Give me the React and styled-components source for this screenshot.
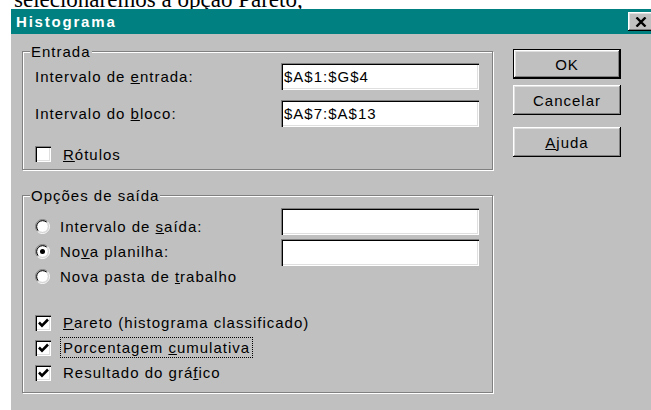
import styled, { createGlobalStyle } from "styled-components";

const GlobalStyle = createGlobalStyle`
  html, body {
    margin: 0;
    background: #fff;
    overflow: hidden;
  }
  body {
    font-family: "Liberation Sans", Arial, sans-serif;
    font-size: 15px;
    letter-spacing: 1px;
    color: #000;
  }
`;

const Page = styled.div`
  width: 651px;
  height: 410px;
  overflow: hidden;
`;

/* tail of the paragraph that sits above the dialog */
const Excerpt = styled.div`
  height: 9px;
  overflow: hidden;
`;

const ExcerptText = styled.p`
  margin: -12px 0 0 14px;
  font-family: "Liberation Serif", "Times New Roman", serif;
  font-size: 23px;
  line-height: 23px;
  letter-spacing: 0;
  white-space: nowrap;
`;

const Desk = styled.div`
  padding-left: 11px;
`;

const Window = styled.div`
  width: 645px;
  background: #c0c0c0;
`;

const TitleBar = styled.div`
  height: 25px;
  display: flex;
  align-items: center;
  justify-content: space-between;
  padding-left: 5px;
  background: #008080;
`;

const Title = styled.span`
  color: #fff;
  font-weight: bold;
  letter-spacing: 1.8px;
`;

const CloseButton = styled.div`
  width: 26px;
  height: 19px;
  margin-right: 2px;
  display: flex;
  align-items: center;
  justify-content: center;
  background: #c0c0c0;
  box-shadow: inset -1px -1px #000, inset 1px 1px #fff, inset -2px -2px #808080,
    inset 2px 2px #dfdfdf;
`;

const DialogBody = styled.div`
  height: 376px;
  display: flex;
  align-items: flex-start;
  padding-left: 11px;
`;

const Groups = styled.div`
  width: 471px;
  padding-top: 17px;
  display: flex;
  flex-direction: column;
  gap: 25px;
`;

const GroupBox = styled.div`
  border: 1px solid #808080;
  box-shadow: inset 1px 1px #fff, 1px 1px #fff;
  padding: 0 13px 7px 12px;
`;

const Caption = styled.div`
  width: fit-content;
  margin: -8px 0 0 -5px;
  padding: 0 1px;
  line-height: 16px;
  background: #c0c0c0;
`;

const FieldGrid = styled.div`
  display: grid;
  grid-template-columns: 246px 198px;
  row-gap: 10px;
  align-items: center;
  margin-top: 3px;
`;

const TextField = styled.input`
  box-sizing: border-box;
  width: 198px;
  height: 27px;
  margin: 0;
  padding: 0 3px;
  border: none;
  outline: none;
  background: #fff;
  font: inherit;
  letter-spacing: inherit;
  color: #000;
  box-shadow: inset 1px 1px #808080, inset 2px 2px #000, inset -1px -1px #fff,
    inset -2px -2px #dfdfdf;
`;

const OptionGrid = styled.div`
  display: grid;
  grid-template-columns: 246px 198px;
  align-items: start;
`;

const RadioList = styled.div`
  padding-top: 10px;
  display: flex;
  flex-direction: column;
`;

const FieldStack = styled.div`
  padding-top: 4px;
  display: flex;
  flex-direction: column;
  gap: 4px;
`;

const CheckList = styled.div`
  margin-top: ${(p) => p.$offset}px;
  display: flex;
  flex-direction: column;
`;

const ChoiceRow = styled.div`
  height: ${(p) => p.$height}px;
  display: flex;
  align-items: center;
  gap: ${(p) => p.$gap}px;
`;

const ChoiceLabel = styled.span`
  padding: 1px 2px;
  line-height: 17px;
  outline: ${(p) => (p.$focused ? "1px dotted #000" : "none")};
`;

const Box = styled.span`
  width: 16px;
  height: 16px;
  flex: none;
  display: flex;
  align-items: center;
  justify-content: center;
  background: #fff;
  box-shadow: inset 1px 1px #808080, inset 2px 2px #000, inset -1px -1px #fff,
    inset -2px -2px #dfdfdf;
`;

const ButtonColumn = styled.div`
  margin-left: 20px;
  padding-top: 15px;
  display: flex;
  flex-direction: column;
`;

const PushButton = styled.div`
  box-sizing: border-box;
  width: 108px;
  height: 30px;
  margin-top: ${(p) => p.$gap}px;
  display: flex;
  align-items: center;
  justify-content: center;
  background: #c0c0c0;
  border: ${(p) => (p.$default ? "1px solid #000" : "none")};
  box-shadow: inset -1px -1px #000, inset 1px 1px #fff, inset -2px -2px #808080,
    inset 2px 2px #dfdfdf;
`;

function Radio({ checked }) {
  return (
    <svg width="15" height="15" viewBox="0 0 15 15" style={{ flex: "none" }}>
      <circle cx="7.5" cy="7.5" r="5.5" fill="#fff" />
      <path d="M2.55 12.45 A7 7 0 0 1 12.45 2.55" fill="none" stroke="#808080" />
      <path d="M12.45 2.55 A7 7 0 0 1 2.55 12.45" fill="none" stroke="#fff" />
      <path d="M3.26 11.74 A6 6 0 0 1 11.74 3.26" fill="none" stroke="#000" />
      <path d="M11.74 3.26 A6 6 0 0 1 3.26 11.74" fill="none" stroke="#dfdfdf" />
      {checked && <circle cx="7.5" cy="7.5" r="2.5" fill="#000" />}
    </svg>
  );
}

function Checkbox({ checked }) {
  return (
    <Box>
      {checked && (
        <svg width="11" height="10" viewBox="0 0 11 10">
          <path d="M1 4.5 L4 7.6 L10 1.5" fill="none" stroke="#000" strokeWidth="2.6" />
        </svg>
      )}
    </Box>
  );
}

function CheckOption({ checked, focused, children }) {
  return (
    <ChoiceRow $height={25} $gap={10}>
      <Checkbox checked={checked} />
      <ChoiceLabel $focused={focused}>{children}</ChoiceLabel>
    </ChoiceRow>
  );
}

function RadioOption({ checked, children }) {
  return (
    <ChoiceRow $height={25} $gap={8}>
      <Radio checked={checked} />
      <ChoiceLabel>{children}</ChoiceLabel>
    </ChoiceRow>
  );
}

export default function App() {
  return (
    <Page>
      <GlobalStyle />
      <Excerpt>
        <ExcerptText>selecionaremos a opção Pareto,</ExcerptText>
      </Excerpt>
      <Desk>
        <Window>
          <TitleBar>
            <Title>Histograma</Title>
            <CloseButton>
              <svg width="12" height="10" viewBox="0 0 12 10">
                <path d="M1.5 0.5 L10.5 9.5 M10.5 0.5 L1.5 9.5" stroke="#000" strokeWidth="2.4" />
              </svg>
            </CloseButton>
          </TitleBar>
          <DialogBody>
            <Groups>
              <GroupBox>
                <Caption>Entrada</Caption>
                <FieldGrid>
                  <span>
                    Intervalo de <u>e</u>ntrada:
                  </span>
                  <TextField readOnly value="$A$1:$G$4" />
                  <span>
                    Intervalo do <u>b</u>loco:
                  </span>
                  <TextField readOnly value="$A$7:$A$13" />
                </FieldGrid>
                <CheckList $offset={19}>
                  <ChoiceRow $height={16} $gap={10}>
                    <Checkbox />
                    <ChoiceLabel>
                      <u>R</u>ótulos
                    </ChoiceLabel>
                  </ChoiceRow>
                </CheckList>
              </GroupBox>

              <GroupBox>
                <Caption>Opções de saída</Caption>
                <OptionGrid>
                  <RadioList>
                    <RadioOption>
                      Intervalo de <u>s</u>aída:
                    </RadioOption>
                    <RadioOption checked>
                      No<u>v</u>a planilha:
                    </RadioOption>
                    <RadioOption>
                      Nova pasta de <u>t</u>rabalho
                    </RadioOption>
                  </RadioList>
                  <FieldStack>
                    <TextField readOnly value="" />
                    <TextField readOnly value="" />
                  </FieldStack>
                </OptionGrid>
                <CheckList $offset={21}>
                  <CheckOption checked>
                    <u>P</u>areto (histograma classificado)
                  </CheckOption>
                  <CheckOption checked focused>
                    Porcentagem <u>c</u>umulativa
                  </CheckOption>
                  <CheckOption checked>
                    Resultado do grá<u>f</u>ico
                  </CheckOption>
                </CheckList>
              </GroupBox>
            </Groups>

            <ButtonColumn>
              <PushButton $default $gap={0}>OK</PushButton>
              <PushButton $gap={6}>Cancelar</PushButton>
              <PushButton $gap={12}>
                <span>
                  <u>A</u>juda
                </span>
              </PushButton>
            </ButtonColumn>
          </DialogBody>
        </Window>
      </Desk>
    </Page>
  );
}
